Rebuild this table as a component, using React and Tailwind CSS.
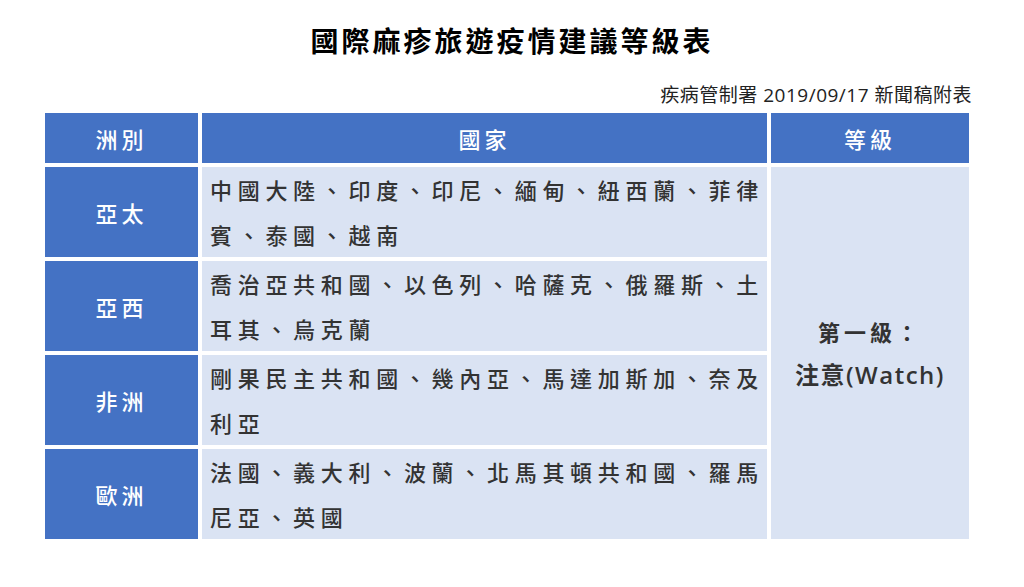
const ROWS = [
  { region: '亞太', lines: ['中國大陸、印度、印尼、緬甸、紐西蘭、菲律', '賓、泰國、越南'] },
  { region: '亞西', lines: ['喬治亞共和國、以色列、哈薩克、俄羅斯、土', '耳其、烏克蘭'] },
  { region: '非洲', lines: ['剛果民主共和國、幾內亞、馬達加斯加、奈及', '利亞'] },
  { region: '歐洲', lines: ['法國、義大利、波蘭、北馬其頓共和國、羅馬', '尼亞、英國'] },
];

export default function App() {
  return (
    <div className="w-[1024px] h-[587px] bg-white font-['Noto_Sans_CJK_TC','Noto_Sans',sans-serif] overflow-hidden">
      <h1 className="pt-[20px] text-center text-[28px] leading-[40px] font-bold tracking-[3px] text-black">
        國際麻疹旅遊疫情建議等級表
      </h1>
      <p className="mt-[23px] pr-[52px] text-right font-['Open_Sans','Noto_Sans_CJK_TC',sans-serif] text-[19px] leading-[24px] tracking-[0.5px] text-[#222]">
        疾病管制署 2019/09/17 新聞稿附表
      </p>
      <div className="ml-[45px] mt-[6px] grid grid-cols-[153px_565px_198px] grid-rows-[50px_90px_90px_90px_90px] gap-[4px]">
        <div className="flex items-center justify-center bg-[#4472c4] text-[22px] font-medium tracking-[4px] text-white">洲別</div>
        <div className="flex items-center justify-center bg-[#4472c4] text-[22px] font-medium tracking-[4px] text-white">國家</div>
        <div className="flex items-center justify-center bg-[#4472c4] text-[22px] font-medium tracking-[4px] text-white">等級</div>
        {ROWS.map((row, i) => (
          <div key={row.region} className="contents">
            <div className="flex items-center justify-center bg-[#4472c4] text-[22px] font-medium tracking-[4px] text-white">
              {row.region}
            </div>
            <div className="bg-[#dae3f3] pl-[8px] text-[22px] leading-[45px] font-medium tracking-[5.7px] text-[#333]">
              {row.lines.map((l) => (
                <div key={l} className="whitespace-nowrap">{l}</div>
              ))}
            </div>
            {i === 0 && (
              <div className="row-span-4 flex flex-col items-center justify-center bg-[#dae3f3] text-[22px] leading-[44px] font-semibold text-[#333]">
                <div className="tracking-[4px]">第一級：</div>
                <div className="font-['Open_Sans','Noto_Sans_CJK_TC',sans-serif] text-[24px] tracking-[1.5px]">注意(Watch)</div>
              </div>
            )}
          </div>
        ))}
      </div>
    </div>
  );
}
